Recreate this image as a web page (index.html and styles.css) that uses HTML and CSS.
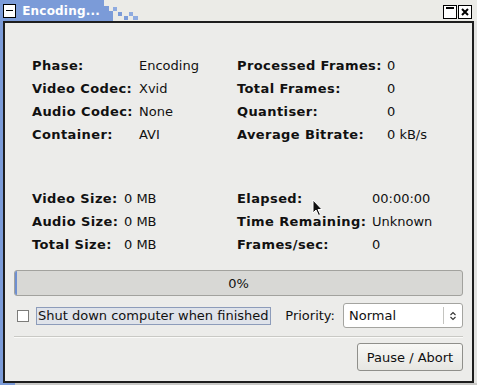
FILE: index.html
```html
<!DOCTYPE html>
<html>
<head>
    <title>Encoding...</title>
    <link rel="stylesheet" href="styles.css">
</head>
<body>
    <div class="window">
        <div class="titlebar">
            <div class="title-tab">
                <span class="tb-btn tb-shade"></span>
                <span class="title">Encoding...</span>
            </div>
            <svg class="title-fade" width="40" height="21" viewBox="0 0 40 21">
                <rect x="0" y="0" width="4" height="21" fill="#7b9bd8"/>
                <rect x="4" y="6" width="5" height="15" fill="#7b9bd8"/>
                <rect x="9" y="11" width="4" height="10" fill="#7b9bd8"/>
                <rect x="13" y="7" width="4" height="4" fill="#8fabe0"/>
                <rect x="18" y="12" width="4" height="4" fill="#7b9bd8"/>
                <rect x="24" y="16" width="4" height="4" fill="#7b9bd8"/>
                <rect x="29" y="12" width="4" height="4" fill="#8fabe0"/>
                <rect x="33" y="16" width="5" height="4" fill="#8fabe0"/>
            </svg>
            <div class="tb-right">
                <span class="tb-btn tb-min"></span>
                <span class="tb-btn tb-close">
                    <svg width="8" height="8" viewBox="0 0 8 8"><path d="M1 1 L7 7 M7 1 L1 7" stroke="#000" stroke-width="2"/></svg>
                </span>
            </div>
        </div>

        <div class="body-row">
            <div class="edge-left"></div>
            <div class="frame">
                <div class="content">
                    <div class="info info-top">
                        <span class="lbl">Phase:</span><span>Encoding</span>
                        <span class="lbl">Processed Frames:</span><span>0</span>
                        <span class="lbl">Video Codec:</span><span>Xvid</span>
                        <span class="lbl">Total Frames:</span><span>0</span>
                        <span class="lbl">Audio Codec:</span><span>None</span>
                        <span class="lbl">Quantiser:</span><span>0</span>
                        <span class="lbl">Container:</span><span>AVI</span>
                        <span class="lbl">Average Bitrate:</span><span>0 kB/s</span>
                    </div>

                    <div class="info info-bottom">
                        <span class="lbl">Video Size:</span><span>0 MB</span>
                        <span class="lbl">Elapsed:</span><span>00:00:00</span>
                        <span class="lbl">Audio Size:</span><span>0 MB</span>
                        <span class="lbl">Time Remaining:</span><span>Unknown</span>
                        <span class="lbl">Total Size:</span><span>0 MB</span>
                        <span class="lbl">Frames/sec:</span><span>0</span>
                    </div>

                    <div class="progress">
                        <div class="progress-fill"></div>
                        <span class="progress-text">0%</span>
                    </div>

                    <div class="options">
                        <span class="checkbox"></span>
                        <span class="check-label">Shut down computer when finished</span>
                        <span class="prio-label">Priority:</span>
                        <div class="combo">
                            <span class="combo-text">Normal</span>
                            <span class="combo-sep"></span>
                            <svg class="combo-arrow" width="8" height="10" viewBox="0 0 8 10">
                                <path d="M1.5 4 L4 1.5 L6.5 4 M1.5 6 L4 8.5 L6.5 6" fill="none" stroke="#333" stroke-width="1.1"/>
                            </svg>
                        </div>
                    </div>

                    <div class="separator"></div>

                    <div class="actions">
                        <button class="push-button">Pause / Abort</button>
                    </div>
                </div>
            </div>
            <div class="edge-right"></div>
        </div>
        <div class="bottom-edge">
            <span class="corner"></span>
        </div>

        <svg class="cursor" width="12" height="18" viewBox="0 0 12 18">
            <path d="M1 1 L1 14 L4 11 L6.5 16.5 L8.5 15.5 L6 10.5 L10 10.5 Z" fill="#111" stroke="#fff" stroke-width="1"/>
        </svg>
    </div>
</body>
</html>
```

FILE: styles.css
```css
body {
    margin: 0;
    font-family: "DejaVu Sans", "Liberation Sans", sans-serif;
    font-size: 13px;
    color: #111;
}

.window {
    position: relative;
    width: 477px;
    height: 385px;
    background-color: #e4e4e2;
    display: flex;
    flex-direction: column;
}

.titlebar {
    height: 21px;
    display: flex;
    align-items: flex-start;
    background-color: #ebebe7;
}

.title-tab {
    height: 21px;
    width: 100px;
    background-color: #7b9bd8;
    display: flex;
    align-items: center;
}

.title {
    color: #fff;
    font-weight: bold;
    font-size: 12px;
    margin-left: 6px;
    letter-spacing: 0.2px;
}

.tb-btn {
    display: inline-block;
    box-sizing: border-box;
    width: 14px;
    height: 14px;
    background-color: #fff;
    border: 1px solid #000;
    position: relative;
}

.tb-shade {
    margin-left: 3px;
    margin-top: 1px;
}

.tb-shade::after {
    content: '';
    position: absolute;
    left: 2px;
    right: 2px;
    top: 5px;
    height: 1px;
    background-color: #000;
}

.tb-right {
    margin-left: auto;
    margin-right: 5px;
    margin-top: 5px;
    display: flex;
    gap: 1px;
}

.tb-min::after {
    content: '';
    position: absolute;
    left: 2px;
    right: 2px;
    top: 1px;
    height: 2px;
    background-color: #000;
}

.tb-close {
    display: flex;
    align-items: center;
    justify-content: center;
}

.body-row {
    flex: 1;
    display: flex;
}

.edge-left {
    width: 3px;
    background-color: #7b9bd8;
}

.edge-right {
    width: 3px;
    background-color: #e4e4e2;
}

.frame {
    flex: 1;
    border: 2px solid #1e1e1e;
    background-color: #ececea;
}

.bottom-edge {
    height: 2px;
    background-color: #c9c9c7;
}

.corner {
    display: block;
    width: 15px;
    height: 2px;
    background-color: #7b9bd8;
}

.content {
    padding: 31px 9px 0 9px;
}

.info {
    display: grid;
    margin-left: 18px;
    grid-auto-rows: 23px;
    align-items: center;
}

.info-top {
    grid-template-columns: 107px 98px 150px auto;
}

.info-bottom {
    margin-top: 41px;
    grid-template-columns: 92px 113px 135px auto;
}

.lbl {
    font-weight: bold;
    letter-spacing: 0.4px;
}

.progress {
    position: relative;
    margin-top: 14px;
    height: 26px;
    box-sizing: border-box;
    border: 1px solid #a2a29e;
    border-radius: 3px;
    background-color: #d8d8d5;
    display: flex;
    align-items: center;
    justify-content: center;
}

.progress-fill {
    position: absolute;
    left: 0;
    top: 0;
    bottom: 0;
    width: 2px;
    background-color: #6e8fd0;
    border-radius: 2px 0 0 2px;
}

.options {
    margin-top: 7px;
    height: 25px;
    display: flex;
    align-items: center;
}

.checkbox {
    box-sizing: border-box;
    width: 12px;
    height: 12px;
    margin-left: 3px;
    background-color: #fff;
    border: 1px solid #7c7c7a;
}

.check-label {
    margin-left: 7px;
    padding: 0 1px 1px 1px;
    line-height: 15px;
    background-color: #dfe3ea;
    border: 1px solid #8d9cba;
}

.prio-label {
    margin-left: auto;
}

.combo {
    margin-left: 8px;
    box-sizing: border-box;
    width: 120px;
    height: 25px;
    background-color: #fff;
    border: 1px solid #a4a4a0;
    border-radius: 3px;
    display: flex;
    align-items: center;
}

.combo-text {
    margin-left: 5px;
    flex: 1;
}

.combo-sep {
    width: 1px;
    height: 17px;
    background-color: #c4c4c0;
}

.combo-arrow {
    margin: 0 5px 0 5px;
}

.separator {
    margin-top: 8px;
    height: 1px;
    background-color: #c9c9c5;
    border-bottom: 1px solid #fafaf8;
}

.actions {
    display: flex;
    justify-content: flex-end;
    margin-top: 5px;
}

.push-button {
    width: 106px;
    height: 28px;
    font-family: "DejaVu Sans", "Liberation Sans", sans-serif;
    font-size: 13px;
    color: #111;
    background: linear-gradient(#f8f8f6, #e6e6e2);
    border: 1px solid #8f8f8b;
    border-radius: 3px;
    padding: 0;
}

.cursor {
    position: absolute;
    left: 312px;
    top: 199px;
}
```
